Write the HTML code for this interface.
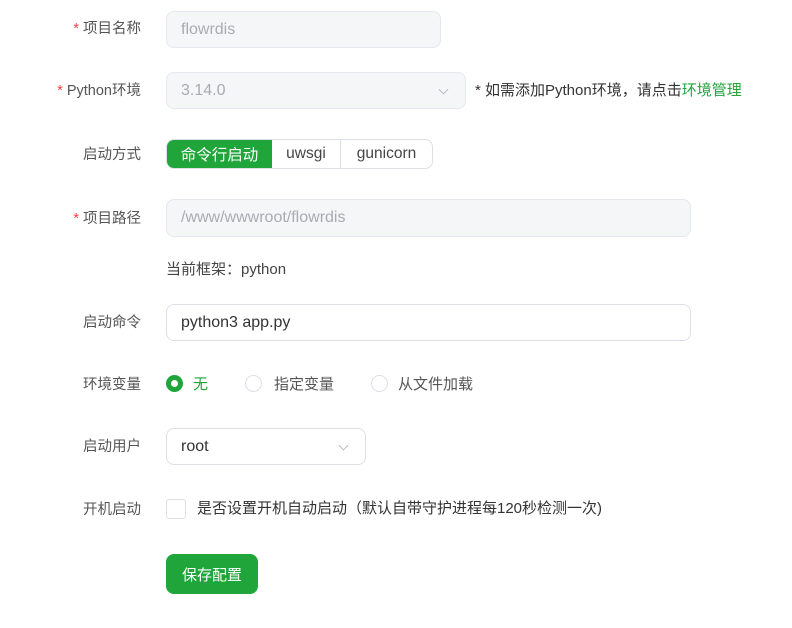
<!DOCTYPE html>
<html><head><meta charset="utf-8"><style>
*{box-sizing:border-box;margin:0;padding:0}
body{width:792px;height:628px;background:#fff;font-family:"Liberation Sans","Noto Sans CJK SC",sans-serif;font-size:15px;color:#555;position:relative;overflow:hidden}
.a{position:absolute;line-height:20px;white-space:nowrap;margin-top:1px}
.lbl{right:651px;text-align:right;font-size:14.5px}
.req{color:#ef4444;margin-right:4px}
.in{position:absolute;border:1px solid #dcdfe6;border-radius:8px;padding-left:14px;display:flex;align-items:center;font-size:16px;color:#333}
.dis{background:#f5f6f7;border-color:#e4e7ed;color:#a8abb2}
.chev{position:absolute;right:18px;top:50%;width:7px;height:7px;border-right:1px solid #b8bbc0;border-bottom:1px solid #b8bbc0;transform:translateY(-70%) rotate(45deg)}
.radio{position:absolute;width:17px;height:17px;border-radius:50%;border:1px solid #dcdfe6;background:#fff}
</style></head><body>
<div class="a lbl" style="top:18px"><span class="req">*</span>项目名称</div>
<div class="in dis" style="left:166px;top:11px;width:275px;height:37px">flowrdis</div>

<div class="a lbl" style="top:80px"><span class="req">*</span>Python环境</div>
<div class="in dis" style="left:166px;top:72px;width:300px;height:37px">3.14.0<span class="chev"></span></div>
<div class="a" style="left:475px;top:80px;color:#333">* 如需添加Python环境，请点击<span style="color:#20a53a">环境管理</span></div>

<div class="a lbl" style="top:144px">启动方式</div>
<div style="position:absolute;left:166px;top:139px;width:267px;height:30px;border:1px solid #dcdfe6;border-radius:8px;overflow:hidden;display:flex;font-size:15.5px;color:#444">
<div style="width:105px;background:#20a53a;color:#fff;display:flex;align-items:center;justify-content:center">命令行启动</div>
<div style="width:69px;border-right:1px solid #dcdfe6;display:flex;align-items:center;justify-content:center">uwsgi</div>
<div style="flex:1;display:flex;align-items:center;justify-content:center">gunicorn</div>
</div>

<div class="a lbl" style="top:208px"><span class="req">*</span>项目路径</div>
<div class="in dis" style="left:166px;top:199px;width:525px;height:38px">/www/wwwroot/flowrdis</div>
<div class="a" style="left:166px;top:259px;color:#444">当前框架：python</div>

<div class="a lbl" style="top:312px">启动命令</div>
<div class="in" style="left:166px;top:304px;width:525px;height:37px">python3 app.py</div>

<div class="a lbl" style="top:374px">环境变量</div>
<div class="radio" style="left:166px;top:375px;border:5px solid #20a53a"></div>
<div class="a" style="left:193px;top:374px;color:#20a53a">无</div>
<div class="radio" style="left:245px;top:375px"></div>
<div class="a" style="left:274px;top:374px">指定变量</div>
<div class="radio" style="left:371px;top:375px"></div>
<div class="a" style="left:398px;top:374px">从文件加载</div>

<div class="a lbl" style="top:436px">启动用户</div>
<div class="in" style="left:166px;top:428px;width:200px;height:37px">root<span class="chev"></span></div>

<div class="a lbl" style="top:499px">开机启动</div>
<div style="position:absolute;left:166px;top:499px;width:20px;height:20px;border:1px solid #dcdfe6;border-radius:3px"></div>
<div class="a" style="left:197px;top:498px;color:#333">是否设置开机自动启动（默认自带守护进程每120秒检测一次)</div>

<div style="position:absolute;left:166px;top:554px;width:92px;height:40px;background:#20a53a;border-radius:8px;color:#fff;display:flex;align-items:center;justify-content:center">保存配置</div>
</body></html>
